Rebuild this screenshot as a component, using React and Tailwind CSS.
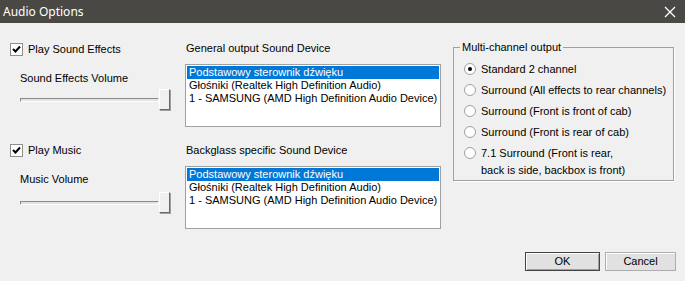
import React from "react";

const devices = [
  "Podstawowy sterownik dźwięku",
  "Głośniki (Realtek High Definition Audio)",
  "1 - SAMSUNG (AMD High Definition Audio Device)",
];

const Check = ({ label }) => (
  <div className="flex items-center h-[13px]">
    <div className="w-[13px] h-[13px] bg-white border border-[#8f8f8f] flex items-center justify-center">
      <svg width="9" height="9" viewBox="0 0 9 9">
        <path d="M1 4 L3.5 6.5 L8 1.5" stroke="#000" strokeWidth="2" fill="none" />
      </svg>
    </div>
    <span className="ml-[5px] leading-[13px]">{label}</span>
  </div>
);

const Slider = () => (
  <div className="flex items-center w-[150px] h-[21px]">
    <div className="flex-1 h-[4px] border-t border-l border-[#8a8a8a] border-b border-r border-b-white border-r-white bg-[#e3e3e3]" />
    <div className="w-[11px] h-[21px] bg-[#f0f0f0] border border-t-white border-l-white border-b-[#696969] border-r-[#696969] shadow-[1px_1px_0_#a0a0a0]" />
  </div>
);

const ListBox = () => (
  <div className="w-[256px] h-[63px] bg-white border border-[#a0a0a0] p-[1px]">
    {devices.map((d, i) => (
      <div
        key={d}
        className={
          "h-[13px] leading-[13px] pl-[2px] whitespace-nowrap " +
          (i === 0 ? "bg-[#0078d7] text-white" : "text-black")
        }
      >
        {d}
      </div>
    ))}
  </div>
);

const Radio = ({ checked, children }) => (
  <div className="flex items-start">
    <div className="mt-[1px] w-[12px] h-[12px] rounded-full bg-white border border-[#a0a0a0] flex items-center justify-center shrink-0">
      {checked && <div className="w-[4px] h-[4px] rounded-full bg-black" />}
    </div>
    <div className="ml-[5px] leading-[18px] -mt-[2px]">{children}</div>
  </div>
);

export default function App() {
  return (
    <div
      className="w-[685px] h-[281px] bg-[#f0f0f0] flex flex-col text-[11px] text-black"
      style={{ fontFamily: '"Liberation Sans", Arial, sans-serif' }}
    >
      {/* Title bar */}
      <div className="h-[23px] bg-[#4a4845] flex items-center justify-between pl-[3px] pr-[9px]">
        <span
          className="text-white text-[12px]"
          style={{ fontFamily: '"Noto Sans", sans-serif' }}
        >
          Audio Options
        </span>
        <svg width="12" height="12" viewBox="0 0 12 12">
          <path d="M1 1 L11 11 M11 1 L1 11" stroke="#fff" strokeWidth="1.3" />
        </svg>
      </div>

      <div className="flex flex-1">
        {/* Left column */}
        <div className="w-[185px] pl-[10px]">
          <div className="mt-[20px]">
            <Check label="Play Sound Effects" />
          </div>
          <div className="ml-[10px] mt-[16px] leading-[13px]">Sound Effects Volume</div>
          <div className="ml-[10px] mt-[4px]">
            <Slider />
          </div>
          <div className="mt-[34px]">
            <Check label="Play Music" />
          </div>
          <div className="ml-[10px] mt-[16px] leading-[13px]">Music Volume</div>
          <div className="ml-[10px] mt-[6px]">
            <Slider />
          </div>
        </div>

        {/* Middle column */}
        <div className="w-[268px]">
          <div className="mt-[19px] ml-[1px] leading-[13px]">General output Sound Device</div>
          <div className="mt-[9px]">
            <ListBox />
          </div>
          <div className="mt-[17px] ml-[1px] leading-[13px]">Backglass specific Sound Device</div>
          <div className="mt-[9px]">
            <ListBox />
          </div>
        </div>

        {/* Right column */}
        <div className="flex flex-col w-[232px]">
          <fieldset className="mt-[18px] w-[221px] h-[140px] border border-[#a0a0a0] shadow-[1px_1px_0_#fff] pl-[10px] pr-[4px] pt-[8px]">
            <legend className="ml-[-4px] px-[2px] leading-[13px]">Multi-channel output</legend>
            <div className="flex flex-col gap-[5px]">
              <Radio checked>Standard 2 channel</Radio>
              <Radio>Surround (All effects to rear channels)</Radio>
              <Radio>Surround (Front is front of cab)</Radio>
              <Radio>Surround (Front is rear of cab)</Radio>
              <Radio>
                7.1 Surround (Front is rear,
                <br />
                <span className="block -mt-[1px]">back is side, backbox is front)</span>
              </Radio>
            </div>
          </fieldset>
          <div className="mt-auto mb-[10px] flex gap-[5px] ml-[72px]">
            <button className="w-[75px] h-[19px] bg-[#e1e1e1] border border-[#444] shadow-[inset_1px_1px_0_#fff,inset_-1px_-1px_0_#a0a0a0] leading-none">
              OK
            </button>
            <button className="w-[71px] h-[19px] bg-[#e1e1e1] border border-[#adadad] shadow-[inset_1px_1px_0_#fff] leading-none">
              Cancel
            </button>
          </div>
        </div>
      </div>
    </div>
  );
}
